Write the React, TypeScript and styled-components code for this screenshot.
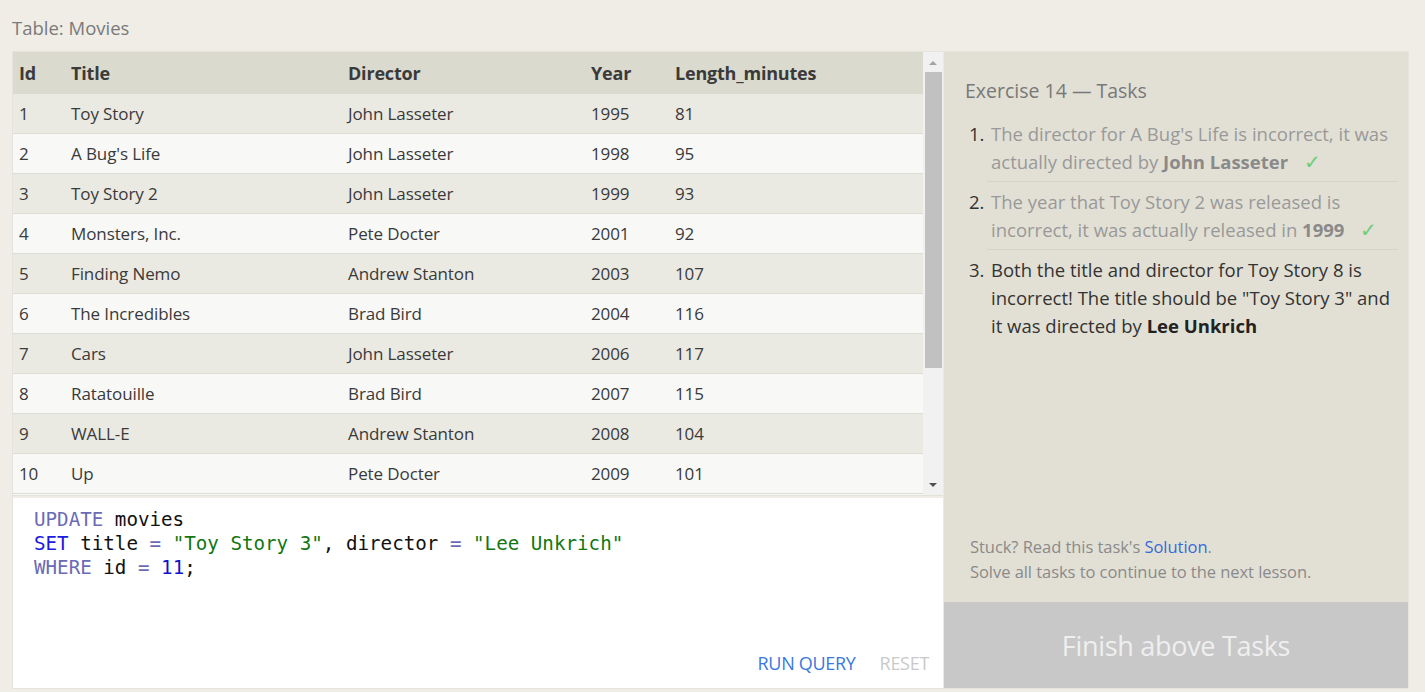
import React from "react";
import styled, { createGlobalStyle } from "styled-components";

const Global = createGlobalStyle`
  html, body { margin: 0; padding: 0; background: #efede6; }
  body { font-family: "Open Sans", "Noto Sans", sans-serif; color: #333; }
`;

const Page = styled.div`
  padding: 16px 16px 4px 12px;
  display: flex;
  flex-direction: column;
`;

const Caption = styled.div`
  font-size: 18.5px;
  color: #7a7a7a;
  height: 24px;
  line-height: 24px;
  margin-bottom: 11px;
`;

const Frame = styled.div`
  display: flex;
  border: 1px solid #e5e4dc;
  height: 636px;
`;

const LeftCol = styled.div`
  width: 930px;
  display: flex;
  flex-direction: column;
`;

const TableArea = styled.div`
  display: flex;
  height: 443px;
  border-bottom: 1px solid #e2e1da;
`;

const TableClip = styled.div`
  flex: 1;
  overflow: hidden;
  background: #f8f8f7;
`;

const Table = styled.table`
  width: 100%;
  border-collapse: collapse;
  font-size: 17px;
`;

const HeadCell = styled.th<{ $w?: number }>`
  text-align: left;
  font-weight: 700;
  font-size: 18px;
  background: #dbdacf;
  height: 42px;
  padding: 0 0 0 6px;
  color: #3a3a3a;
  letter-spacing: -0.2px;
  width: ${(p) => (p.$w ? `${p.$w}px` : "auto")};
`;

const Row = styled.tr<{ $odd: boolean }>`
  background: ${(p) => (p.$odd ? "#eae9e2" : "#f8f8f7")};
  border-bottom: 1px solid #dedcd6;
`;

const Cell = styled.td`
  height: 39px;
  padding: 0 0 0 6px;
  color: #3a3a3a;
  letter-spacing: -0.1px;
`;

const ScrollBar = styled.div`
  width: 20px;
  background: #f1f1f1;
  display: flex;
  flex-direction: column;
  align-items: center;
`;

const Arrow = styled.div<{ $down?: boolean }>`
  width: 0;
  height: 0;
  border-left: 4px solid transparent;
  border-right: 4px solid transparent;
  ${(p) =>
    p.$down
      ? "border-top: 4px solid #505050; margin-top: auto; margin-bottom: 8px;"
      : "border-bottom: 4px solid #a3a3a3; margin-top: 9px;"}
`;

const Thumb = styled.div`
  width: 17px;
  height: 296px;
  background: #c1c1c1;
  margin-top: 7px;
`;

const Editor = styled.div`
  flex: 1;
  background: #fff;
  display: flex;
  flex-direction: column;
  padding: 10px 14px 13px 21px;
  border-top: 2px solid #efede6;
`;

const Code = styled.pre`
  margin: 0;
  font-family: "DejaVu Sans Mono", "Liberation Mono", monospace;
  font-size: 19.2px;
  line-height: 24px;
  color: #111;
  flex: 1;
`;

const Kw = styled.span<{ $c: string }>`
  color: ${(p) => p.$c};
`;

const Actions = styled.div`
  display: flex;
  justify-content: flex-end;
  gap: 24px;
  font-size: 18px;
  line-height: 24px;
`;

const ActionBtn = styled.span<{ $on?: boolean }>`
  color: ${(p) => (p.$on ? "#3a78e0" : "#c9c9c9")};
  letter-spacing: -0.3px;
`;

const RightCol = styled.div`
  flex: 1;
  background: #e2e0d5;
  display: flex;
  flex-direction: column;
  border-left: 1px solid #ebe9e2;
`;

const Tasks = styled.div`
  flex: 1;
  padding: 26px 10px 0 21px;
  display: flex;
  flex-direction: column;
`;

const TaskTitle = styled.div`
  font-size: 19.5px;
  color: #787878;
  line-height: 26px;
  margin-bottom: 16px;
`;

const TaskList = styled.ol`
  margin: 0;
  padding: 0;
  list-style: none;
`;

const TaskItem = styled.li<{ $done?: boolean; $last?: boolean }>`
  display: flex;
  font-size: 18.5px;
  line-height: 28px;
  padding: 0 0 5px 0;
  margin-bottom: 6px;
  border-bottom: ${(p) => (p.$last ? "none" : "1px solid #d6d4c9")};
  margin-left: 22px;
  color: ${(p) => (p.$done ? "#999" : "#333")};
`;

const Num = styled.span`
  width: 22px;
  margin-left: -18px;
  color: #333;
  flex: none;
`;

const Strong = styled.b<{ $done?: boolean }>`
  color: ${(p) => (p.$done ? "#8a8a8a" : "#222")};
`;

const Check = styled.span`
  display: inline-block;
  color: #6fce7a;
  margin-left: 16px;
  font-size: 20px;
  line-height: 22px;
`;

const Help = styled.div`
  margin-top: auto;
  font-size: 16.5px;
  line-height: 25px;
  color: #8a8a8a;
  padding: 0 0 18px 5px;
  letter-spacing: -0.05px;
`;

const Link = styled.span`
  color: #3869d9;
`;

const Finish = styled.div`
  height: 86px;
  background: #c8c8c8;
  color: #efefef;
  font-size: 27px;
  display: flex;
  align-items: center;
  justify-content: center;
  letter-spacing: -0.3px;
`;

const movies: [number, string, string, number, number][] = [
  [1, "Toy Story", "John Lasseter", 1995, 81],
  [2, "A Bug's Life", "John Lasseter", 1998, 95],
  [3, "Toy Story 2", "John Lasseter", 1999, 93],
  [4, "Monsters, Inc.", "Pete Docter", 2001, 92],
  [5, "Finding Nemo", "Andrew Stanton", 2003, 107],
  [6, "The Incredibles", "Brad Bird", 2004, 116],
  [7, "Cars", "John Lasseter", 2006, 117],
  [8, "Ratatouille", "Brad Bird", 2007, 115],
  [9, "WALL-E", "Andrew Stanton", 2008, 104],
  [10, "Up", "Pete Docter", 2009, 101],
];

export default function App() {
  return (
    <>
      <Global />
      <Page>
        <Caption>Table: Movies</Caption>
        <Frame>
          <LeftCol>
            <TableArea>
              <TableClip>
                <Table>
                  <thead>
                    <tr>
                      <HeadCell $w={46}>Id</HeadCell>
                      <HeadCell $w={271}>Title</HeadCell>
                      <HeadCell $w={237}>Director</HeadCell>
                      <HeadCell $w={78}>Year</HeadCell>
                      <HeadCell>Length_minutes</HeadCell>
                    </tr>
                  </thead>
                  <tbody>
                    {movies.map((m, i) => (
                      <Row key={m[0]} $odd={i % 2 === 0}>
                        {m.map((v, j) => (
                          <Cell key={j}>{v}</Cell>
                        ))}
                      </Row>
                    ))}
                  </tbody>
                </Table>
              </TableClip>
              <ScrollBar>
                <Arrow />
                <Thumb />
                <Arrow $down />
              </ScrollBar>
            </TableArea>
            <Editor>
              <Code>
                <Kw $c="#6b6bb5">UPDATE</Kw> movies{"\n"}
                <Kw $c="#1a1ae0">SET</Kw> title <Kw $c="#6b6bb5">=</Kw>{" "}
                <Kw $c="#117711">"Toy Story 3"</Kw>, director{" "}
                <Kw $c="#6b6bb5">=</Kw> <Kw $c="#117711">"Lee Unkrich"</Kw>
                {"\n"}
                <Kw $c="#6b6bb5">WHERE</Kw> id <Kw $c="#6b6bb5">=</Kw>{" "}
                <Kw $c="#1111cc">11</Kw>;
              </Code>
              <Actions>
                <ActionBtn $on>RUN QUERY</ActionBtn>
                <ActionBtn>RESET</ActionBtn>
              </Actions>
            </Editor>
          </LeftCol>
          <RightCol>
            <Tasks>
              <TaskTitle>Exercise 14 — Tasks</TaskTitle>
              <TaskList>
                <TaskItem $done>
                  <Num>1.</Num>
                  <span>
                    The director for A Bug's Life is incorrect, it was actually
                    directed by <Strong $done>John Lasseter</Strong>
                    <Check>✓</Check>
                  </span>
                </TaskItem>
                <TaskItem $done>
                  <Num>2.</Num>
                  <span>
                    The year that Toy Story 2 was released is incorrect, it was
                    actually released in <Strong $done>1999</Strong>
                    <Check>✓</Check>
                  </span>
                </TaskItem>
                <TaskItem $last>
                  <Num>3.</Num>
                  <span>
                    Both the title and director for Toy Story 8 is incorrect!
                    The title should be "Toy Story 3" and it was directed by{" "}
                    <Strong>Lee Unkrich</Strong>
                  </span>
                </TaskItem>
              </TaskList>
              <Help>
                Stuck? Read this task's <Link>Solution</Link>.<br />
                Solve all tasks to continue to the next lesson.
              </Help>
            </Tasks>
            <Finish>Finish above Tasks</Finish>
          </RightCol>
        </Frame>
      </Page>
    </>
  );
}
